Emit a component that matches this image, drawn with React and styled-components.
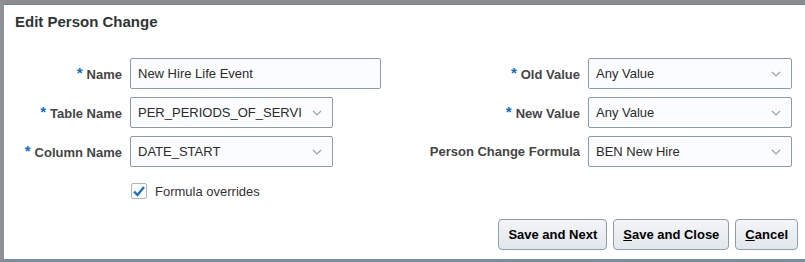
import styled, { createGlobalStyle } from 'styled-components'

const GlobalStyle = createGlobalStyle`
    html, body {
        margin: 0;
        padding: 0;
        background: #ffffff;
    }
    body {
        font-family: "Liberation Sans", Arial, sans-serif;
    }
`

const Dialog = styled.div`
    box-sizing: border-box;
    width: 805px;
    height: 262px;
    background: #ffffff;
    border-left: 4px solid #8d9196;
    border-top: 4px solid #8c8c8e;
    border-bottom: 3px solid #7b8d9b;
    box-shadow: inset 0 1px 0 #6f8596;
    display: flex;
    flex-direction: column;
`

const Title = styled.h1`
    margin: 0;
    padding: 9px 0 0 11px;
    height: 22px;
    font-size: 15px;
    line-height: 18px;
    font-weight: bold;
    color: #2f3535;
`

const Form = styled.div`
    margin-top: 23px;
    display: grid;
    grid-template-columns: 118px 251px 191px 204px;
    grid-auto-rows: 31px;
    column-gap: 8px;
    row-gap: 8px;
    align-items: center;
`

const Label = styled.label`
    text-align: right;
    font-size: 13px;
    font-weight: bold;
    color: #454545;
    white-space: nowrap;
`

const Req = styled.span`
    color: #0a6ecb;
    font-size: 15px;
    position: relative;
    top: -1px;
    margin-right: 4px;
`

const fieldBase = `
    box-sizing: border-box;
    height: 31px;
    border: 1px solid #8b9dab;
    border-radius: 2px;
    background: #fbfcfd;
    font-family: "Liberation Sans", Arial, sans-serif;
    font-size: 13px;
    color: #2b2b2b;
    padding: 0 0 0 7px;
`

const TextInput = styled.div`
    ${fieldBase}
    display: flex;
    align-items: center;
    width: ${({ $w }) => $w}px;
`

const Select = styled.div`
    ${fieldBase}
    width: ${({ $w }) => $w}px;
    display: flex;
    align-items: center;
    justify-content: space-between;
    padding-right: 10px;
    overflow: hidden;
    white-space: nowrap;
`

const Chevron = () => (
    <svg width="10" height="6" viewBox="0 0 10 6" style={{ flex: 'none' }}>
        <path d="M1 1 L5 5 L9 1" fill="none" stroke="#9aa3aa" strokeWidth="1.2" />
    </svg>
)

const CheckRow = styled.div`
    margin: 16px 0 0 127px;
    display: flex;
    align-items: center;
    gap: 8px;
    font-size: 13px;
    color: #333;
`

const Box = styled.span`
    box-sizing: border-box;
    width: 16px;
    height: 16px;
    border: 1px solid #a9b6c0;
    border-radius: 2px;
    background: #fff;
    display: flex;
    align-items: center;
    justify-content: center;
`

const Buttons = styled.div`
    margin-top: 20px;
    padding-right: 7px;
    display: flex;
    justify-content: flex-end;
    gap: 6px;
`

const Button = styled.button`
    box-sizing: border-box;
    height: 31px;
    padding: 0 9px;
    border: 1px solid #8d9eab;
    border-radius: 4px;
    background: linear-gradient(#f3f5f7, #e2e7eb);
    font-family: "Liberation Sans", Arial, sans-serif;
    font-size: 13px;
    font-weight: bold;
    color: #000;
    u { text-decoration: underline; }
`

const App = () => (
    <>
        <GlobalStyle />
        <Dialog>
            <Title>Edit Person Change</Title>
            <Form>
                <Label><Req>*</Req>Name</Label>
                <TextInput $w={251}>New Hire Life Event</TextInput>
                <Label><Req>*</Req>Old Value</Label>
                <Select $w={204}>Any Value<Chevron /></Select>

                <Label><Req>*</Req>Table Name</Label>
                <Select $w={203}>PER_PERIODS_OF_SERVI<Chevron /></Select>
                <Label><Req>*</Req>New Value</Label>
                <Select $w={204}>Any Value<Chevron /></Select>

                <Label><Req>*</Req>Column Name</Label>
                <Select $w={203}>DATE_START<Chevron /></Select>
                <Label>Person Change Formula</Label>
                <Select $w={204}>BEN New Hire<Chevron /></Select>
            </Form>
            <CheckRow>
                <Box>
                    <svg width="14" height="12" viewBox="0 0 14 12">
                        <path d="M2 6.5 L5.5 10 L12 2" fill="none" stroke="#1f6fc4" strokeWidth="2.4" />
                    </svg>
                </Box>
                Formula overrides
            </CheckRow>
            <Buttons>
                <Button>Save and Next</Button>
                <Button><u>S</u>ave and Close</Button>
                <Button><u>C</u>ancel</Button>
            </Buttons>
        </Dialog>
    </>
)

export default App
